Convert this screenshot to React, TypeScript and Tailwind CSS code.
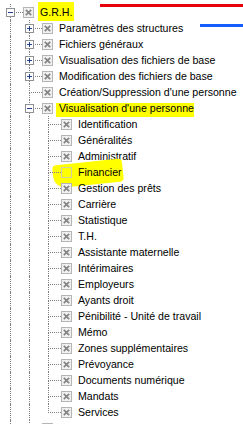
import React from 'react';

type Row = {
  level: number;
  label: string;
  exp?: 'plus' | 'minus';
  check: 'x' | 'empty';
  guides: boolean[];
  hasNext: boolean;
  hl?: 'grh' | 'bar' | 'stroke';
};

const level2 = [
  'Identification',
  'Généralités',
  'Administratif',
  'Financier',
  'Gestion des prêts',
  'Carrière',
  'Statistique',
  'T.H.',
  'Assistante maternelle',
  'Intérimaires',
  'Employeurs',
  'Ayants droit',
  'Pénibilité - Unité de travail',
  'Mémo',
  'Zones supplémentaires',
  'Prévoyance',
  'Documents numérique',
  'Mandats',
  'Services',
];

const rows: Row[] = [
  { level: 0, label: 'G.R.H.', exp: 'minus', check: 'x', guides: [], hasNext: true, hl: 'grh' },
  { level: 1, label: 'Paramètres des structures', exp: 'plus', check: 'x', guides: [true], hasNext: true },
  { level: 1, label: 'Fichiers généraux', exp: 'plus', check: 'x', guides: [true], hasNext: true },
  { level: 1, label: 'Visualisation des fichiers de base', exp: 'plus', check: 'x', guides: [true], hasNext: true },
  { level: 1, label: 'Modification des fichiers de base', exp: 'plus', check: 'x', guides: [true], hasNext: true },
  { level: 1, label: "Création/Suppression d'une personne", check: 'x', guides: [true], hasNext: true },
  { level: 1, label: "Visualisation d'une personne", exp: 'minus', check: 'x', guides: [true], hasNext: true, hl: 'bar' },
  ...level2.map((label, i): Row => ({
    level: 2,
    label,
    check: label === 'Financier' ? 'empty' : 'x',
    guides: [true, true],
    hasNext: i < level2.length - 1,
    hl: label === 'Financier' ? 'stroke' : undefined,
  })),
  { level: 1, label: '', exp: 'plus', check: 'x', guides: [true], hasNext: true },
];

function Expander({ kind }: { kind: 'plus' | 'minus' }) {
  return (
    <svg className="absolute left-[6px] top-[4px]" width="9" height="9" viewBox="0 0 9 9">
      <rect x="0.5" y="0.5" width="8" height="8" fill="#ffffff" stroke="#8e9196" />
      <path d="M2 4.5H7" stroke="#22408a" strokeWidth="1" />
      {kind === 'plus' && <path d="M4.5 2V7" stroke="#22408a" strokeWidth="1" />}
    </svg>
  );
}

function Check({ kind }: { kind: 'x' | 'empty' }) {
  return (
    <div className="relative h-[11px] w-[11px] shrink-0">
      <svg width="11" height="11" viewBox="0 0 11 11">
        {kind === 'x' ? (
          <>
            <rect x="0.5" y="0.5" width="10" height="10" fill="#f1f1f1" stroke="#b5b5b5" />
            <path d="M2.8 2.8L8.2 8.2M8.2 2.8L2.8 8.2" stroke="#868686" strokeWidth="1.8" />
          </>
        ) : (
          <rect x="0.5" y="0.5" width="10" height="10" fill="none" stroke="#d2d2a8" />
        )}
      </svg>
    </div>
  );
}

// marker highlights drawn on top of the screenshot, behind the text
function Highlight({ kind }: { kind: 'grh' | 'bar' | 'stroke' }) {
  if (kind === 'grh') {
    return <div className="absolute left-[38px] top-[-2px] h-[19px] w-[36px] bg-[#ffff00]" />;
  }
  if (kind === 'bar') {
    return <div className="absolute left-[56px] top-[3px] h-[14px] w-[138px] bg-[#ffff00]" />;
  }
  return (
    <div className="absolute left-[53px] top-[-2px] h-[23px] w-[70px] rotate-[-6deg] rounded-[4px] rounded-bl-[12px] bg-[#ffff00]" />
  );
}

function TreeRow({ row }: { row: Row }) {
  return (
    <div className="relative flex h-[16px] items-center">
      {row.hl && <Highlight kind={row.hl} />}
      {row.guides.map((g, i) => (
        <div key={i} className="relative flex h-full w-[19px] shrink-0 pl-[10px]">
          {g && <div className="h-full border-l border-dotted border-[#808080]" />}
        </div>
      ))}
      <div className="relative flex h-full w-[23px] shrink-0 pl-[10px]">
        <div className="flex w-[13px] flex-col">
          <div className="h-[9px] border-b border-l border-dotted border-[#808080]" />
          {row.hasNext && <div className="h-[7px] border-l border-dotted border-[#808080]" />}
        </div>
        {row.exp && <Expander kind={row.exp} />}
      </div>
      <Check kind={row.check} />
      <span className="relative ml-[6px] whitespace-nowrap">{row.label}</span>
    </div>
  );
}

export default function App() {
  return (
    <div className="relative h-[424px] w-[243px] overflow-hidden bg-white font-['Liberation_Sans',Arial,sans-serif] text-[10.6px] leading-[16px] text-black">
      <div className="absolute left-[100px] right-0 top-[4px] z-50 h-[3px] bg-red-600" />
      <div className="absolute left-[200px] right-0 top-[24px] z-50 h-[3px] bg-blue-600" />
      <div className="pt-[4px]">
        {rows.map((row, i) => (
          <TreeRow key={i} row={row} />
        ))}
      </div>
    </div>
  );
}
